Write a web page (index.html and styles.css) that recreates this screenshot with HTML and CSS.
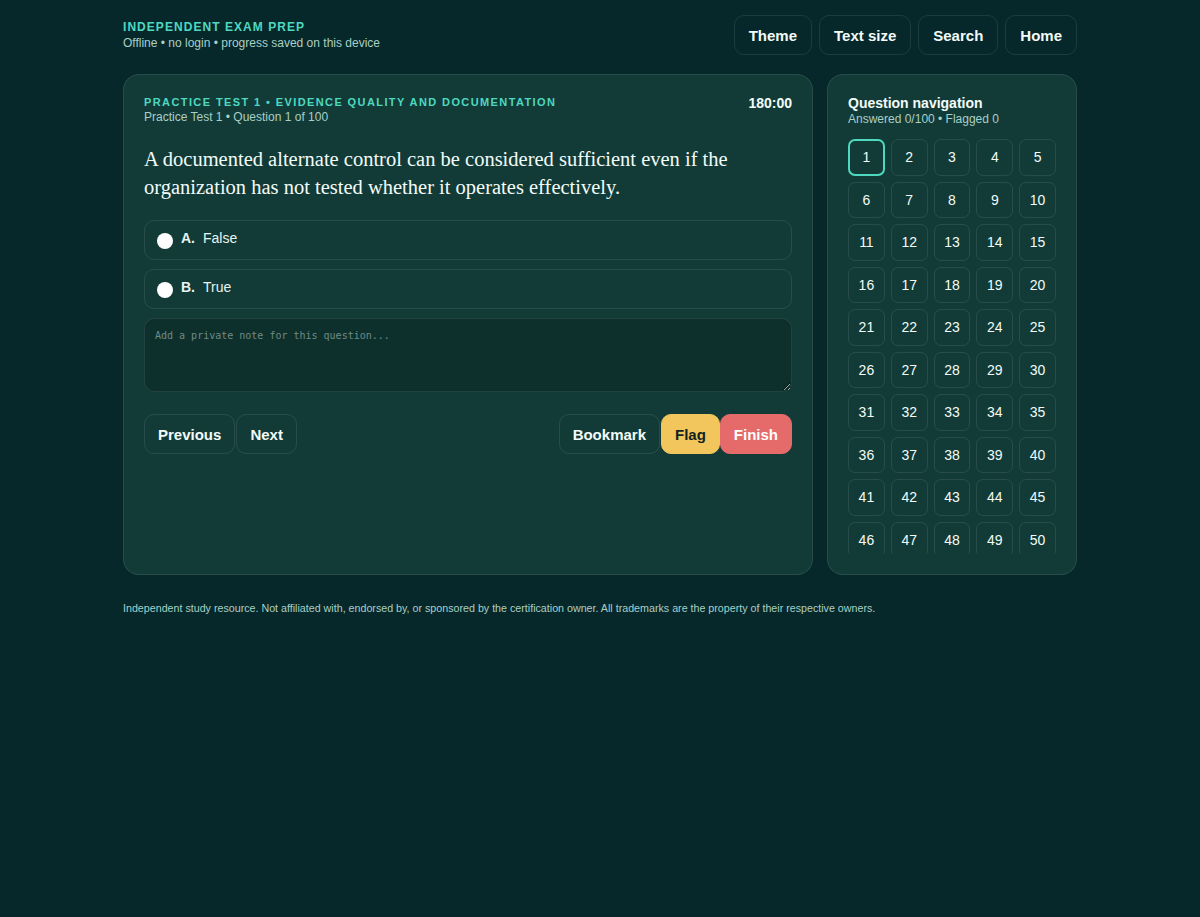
FILE: index.html
```html
<!DOCTYPE html>
<html lang="en">
<head>
  <meta charset="UTF-8">
  <title>Independent Exam Prep</title>
  <link rel="stylesheet" href="styles.css">
</head>
<body>
  <div class="wrap">
    <header class="top">
      <div class="brand">
        <div class="brand-title">Independent Exam Prep</div>
        <div class="brand-sub">Offline • no login • progress saved on this device</div>
      </div>
      <nav class="top-actions">
        <button class="btn">Theme</button>
        <button class="btn">Text size</button>
        <button class="btn">Search</button>
        <button class="btn">Home</button>
      </nav>
    </header>

    <main class="layout">
      <section class="panel quiz">
        <div class="quiz-head">
          <div>
            <div class="kicker">Practice Test 1 • Evidence Quality and Documentation</div>
            <div class="meta">Practice Test 1 • Question 1 of 100</div>
          </div>
          <div class="timer">180:00</div>
        </div>

        <h1 class="question">A documented alternate control can be considered sufficient even if the organization has not tested whether it operates effectively.</h1>

        <label class="option">
          <input type="radio" name="answer">
          <span class="letter">A.</span>
          <span>False</span>
        </label>
        <label class="option">
          <input type="radio" name="answer">
          <span class="letter">B.</span>
          <span>True</span>
        </label>

        <textarea class="note" placeholder="Add a private note for this question..."></textarea>

        <div class="controls">
          <div class="group">
            <button class="btn">Previous</button>
            <button class="btn">Next</button>
          </div>
          <div class="group">
            <button class="btn">Bookmark</button>
            <button class="btn flag">Flag</button>
            <button class="btn finish">Finish</button>
          </div>
        </div>
      </section>

      <aside class="panel sidenav">
        <div class="side-title">Question navigation</div>
        <div class="meta">Answered 0/100 • Flagged 0</div>
        <div class="qgrid" id="qgrid"></div>
      </aside>
    </main>

    <footer class="foot">Independent study resource. Not affiliated with, endorsed by, or sponsored by the certification owner. All trademarks are the property of their respective owners.</footer>
  </div>

  <script>
    (function() {
      var grid = document.getElementById('qgrid');
      for (var i = 1; i <= 100; i++) {
        var cell = document.createElement('button');
        cell.className = 'qcell' + (i === 1 ? ' current' : '');
        cell.textContent = i;
        grid.appendChild(cell);
      }
    })();
  </script>
</body>
</html>
```

FILE: styles.css
```css
* {
  box-sizing: border-box;
  margin: 0;
  padding: 0;
}
body {
  background: #06282a;
  color: #e8f4f1;
  font-family: "Liberation Sans", Arial, sans-serif;
  font-size: 14px;
}
.wrap {
  width: 954px;
  margin: 0 auto;
  padding-top: 15px;
}
.top {
  display: flex;
  justify-content: space-between;
  align-items: flex-start;
  margin-bottom: 19px;
}
.brand {
  padding-top: 5px;
}
.brand-title {
  color: #4fd8c0;
  font-size: 12px;
  font-weight: 700;
  letter-spacing: 1.05px;
  text-transform: uppercase;
  line-height: 14px;
}
.brand-sub {
  color: #a9cfc6;
  font-size: 12px;
  line-height: 16px;
  margin-top: 1px;
}
.top-actions {
  display: flex;
  gap: 7px;
}
.btn {
  height: 40px;
  padding: 0 13px;
  border: 1px solid rgba(255, 255, 255, 0.09);
  border-radius: 10px;
  background: transparent;
  color: #f3fbf9;
  font-family: inherit;
  font-size: 15px;
  font-weight: 700;
}
.top-actions .btn {
  padding: 0 14px;
}
.layout {
  display: grid;
  grid-template-columns: 690px 250px;
  gap: 14px;
}
.panel {
  height: 501px;
  background: #123b37;
  border: 1px solid rgba(255, 255, 255, 0.09);
  border-radius: 16px;
  padding: 20px;
}
.quiz-head {
  display: flex;
  justify-content: space-between;
  align-items: flex-start;
}
.kicker {
  color: #4fd8c0;
  font-size: 11px;
  font-weight: 700;
  letter-spacing: 1.4px;
  text-transform: uppercase;
  line-height: 14px;
}
.meta {
  color: #a9cfc6;
  font-size: 12px;
  line-height: 16px;
}
.timer {
  font-size: 14px;
  font-weight: 700;
  color: #f3fbf9;
}
.question {
  font-family: "Liberation Serif", "Times New Roman", serif;
  font-weight: 400;
  font-size: 20.5px;
  line-height: 28px;
  color: #f3fbf9;
  margin: 20px 0 19px;
}
.option {
  display: flex;
  align-items: center;
  gap: 8px;
  height: 40px;
  padding: 0 12px;
  margin-bottom: 9px;
  border: 1px solid rgba(255, 255, 255, 0.09);
  border-radius: 10px;
  font-size: 14px;
  line-height: 16px;
}
.option span {
  margin-top: -5px;
}
.option input {
  appearance: none;
  width: 16px;
  height: 16px;
  border-radius: 50%;
  background: #fff;
  margin-top: 2px;
}
.option .letter {
  font-weight: 700;
}
.note {
  display: block;
  width: 100%;
  height: 74px;
  margin-top: 3px;
  padding: 11px 10px 10px;
  background: #0e302d;
  border: 1px solid rgba(255, 255, 255, 0.09);
  border-radius: 10px;
  color: #e8f4f1;
  font-family: "DejaVu Sans Mono", monospace;
  font-size: 10px;
  resize: vertical;
}
.note::placeholder {
  color: #6e8a85;
}
.controls {
  display: flex;
  justify-content: space-between;
  margin-top: 22px;
}
.group {
  display: flex;
  gap: 1px;
}
.group .btn.flag {
  background: #f2c65c;
  border-color: #f2c65c;
  color: #10231f;
}
.group .btn.finish {
  background: #e56a6a;
  border-color: #e56a6a;
  color: #fff;
  margin-left: -1px;
}
.sidenav {
  display: flex;
  flex-direction: column;
}
.side-title {
  font-size: 14px;
  font-weight: 700;
  color: #f3fbf9;
  line-height: 16px;
}
.qgrid {
  flex: 1;
  min-height: 0;
  overflow-y: auto;
  scrollbar-width: none;
  display: grid;
  grid-template-columns: repeat(5, 1fr);
  grid-auto-rows: 36.5px;
  gap: 6px;
  margin-top: 12px;
}
.qcell {
  background: transparent;
  border: 1px solid rgba(255, 255, 255, 0.09);
  border-radius: 7px;
  color: #f3fbf9;
  font-family: inherit;
  font-size: 14px;
}
.qcell.current {
  border: 2px solid #4fd8c0;
}
.foot {
  margin-top: 27px;
  font-size: 10.7px;
  color: #a9cfc6;
}
```
